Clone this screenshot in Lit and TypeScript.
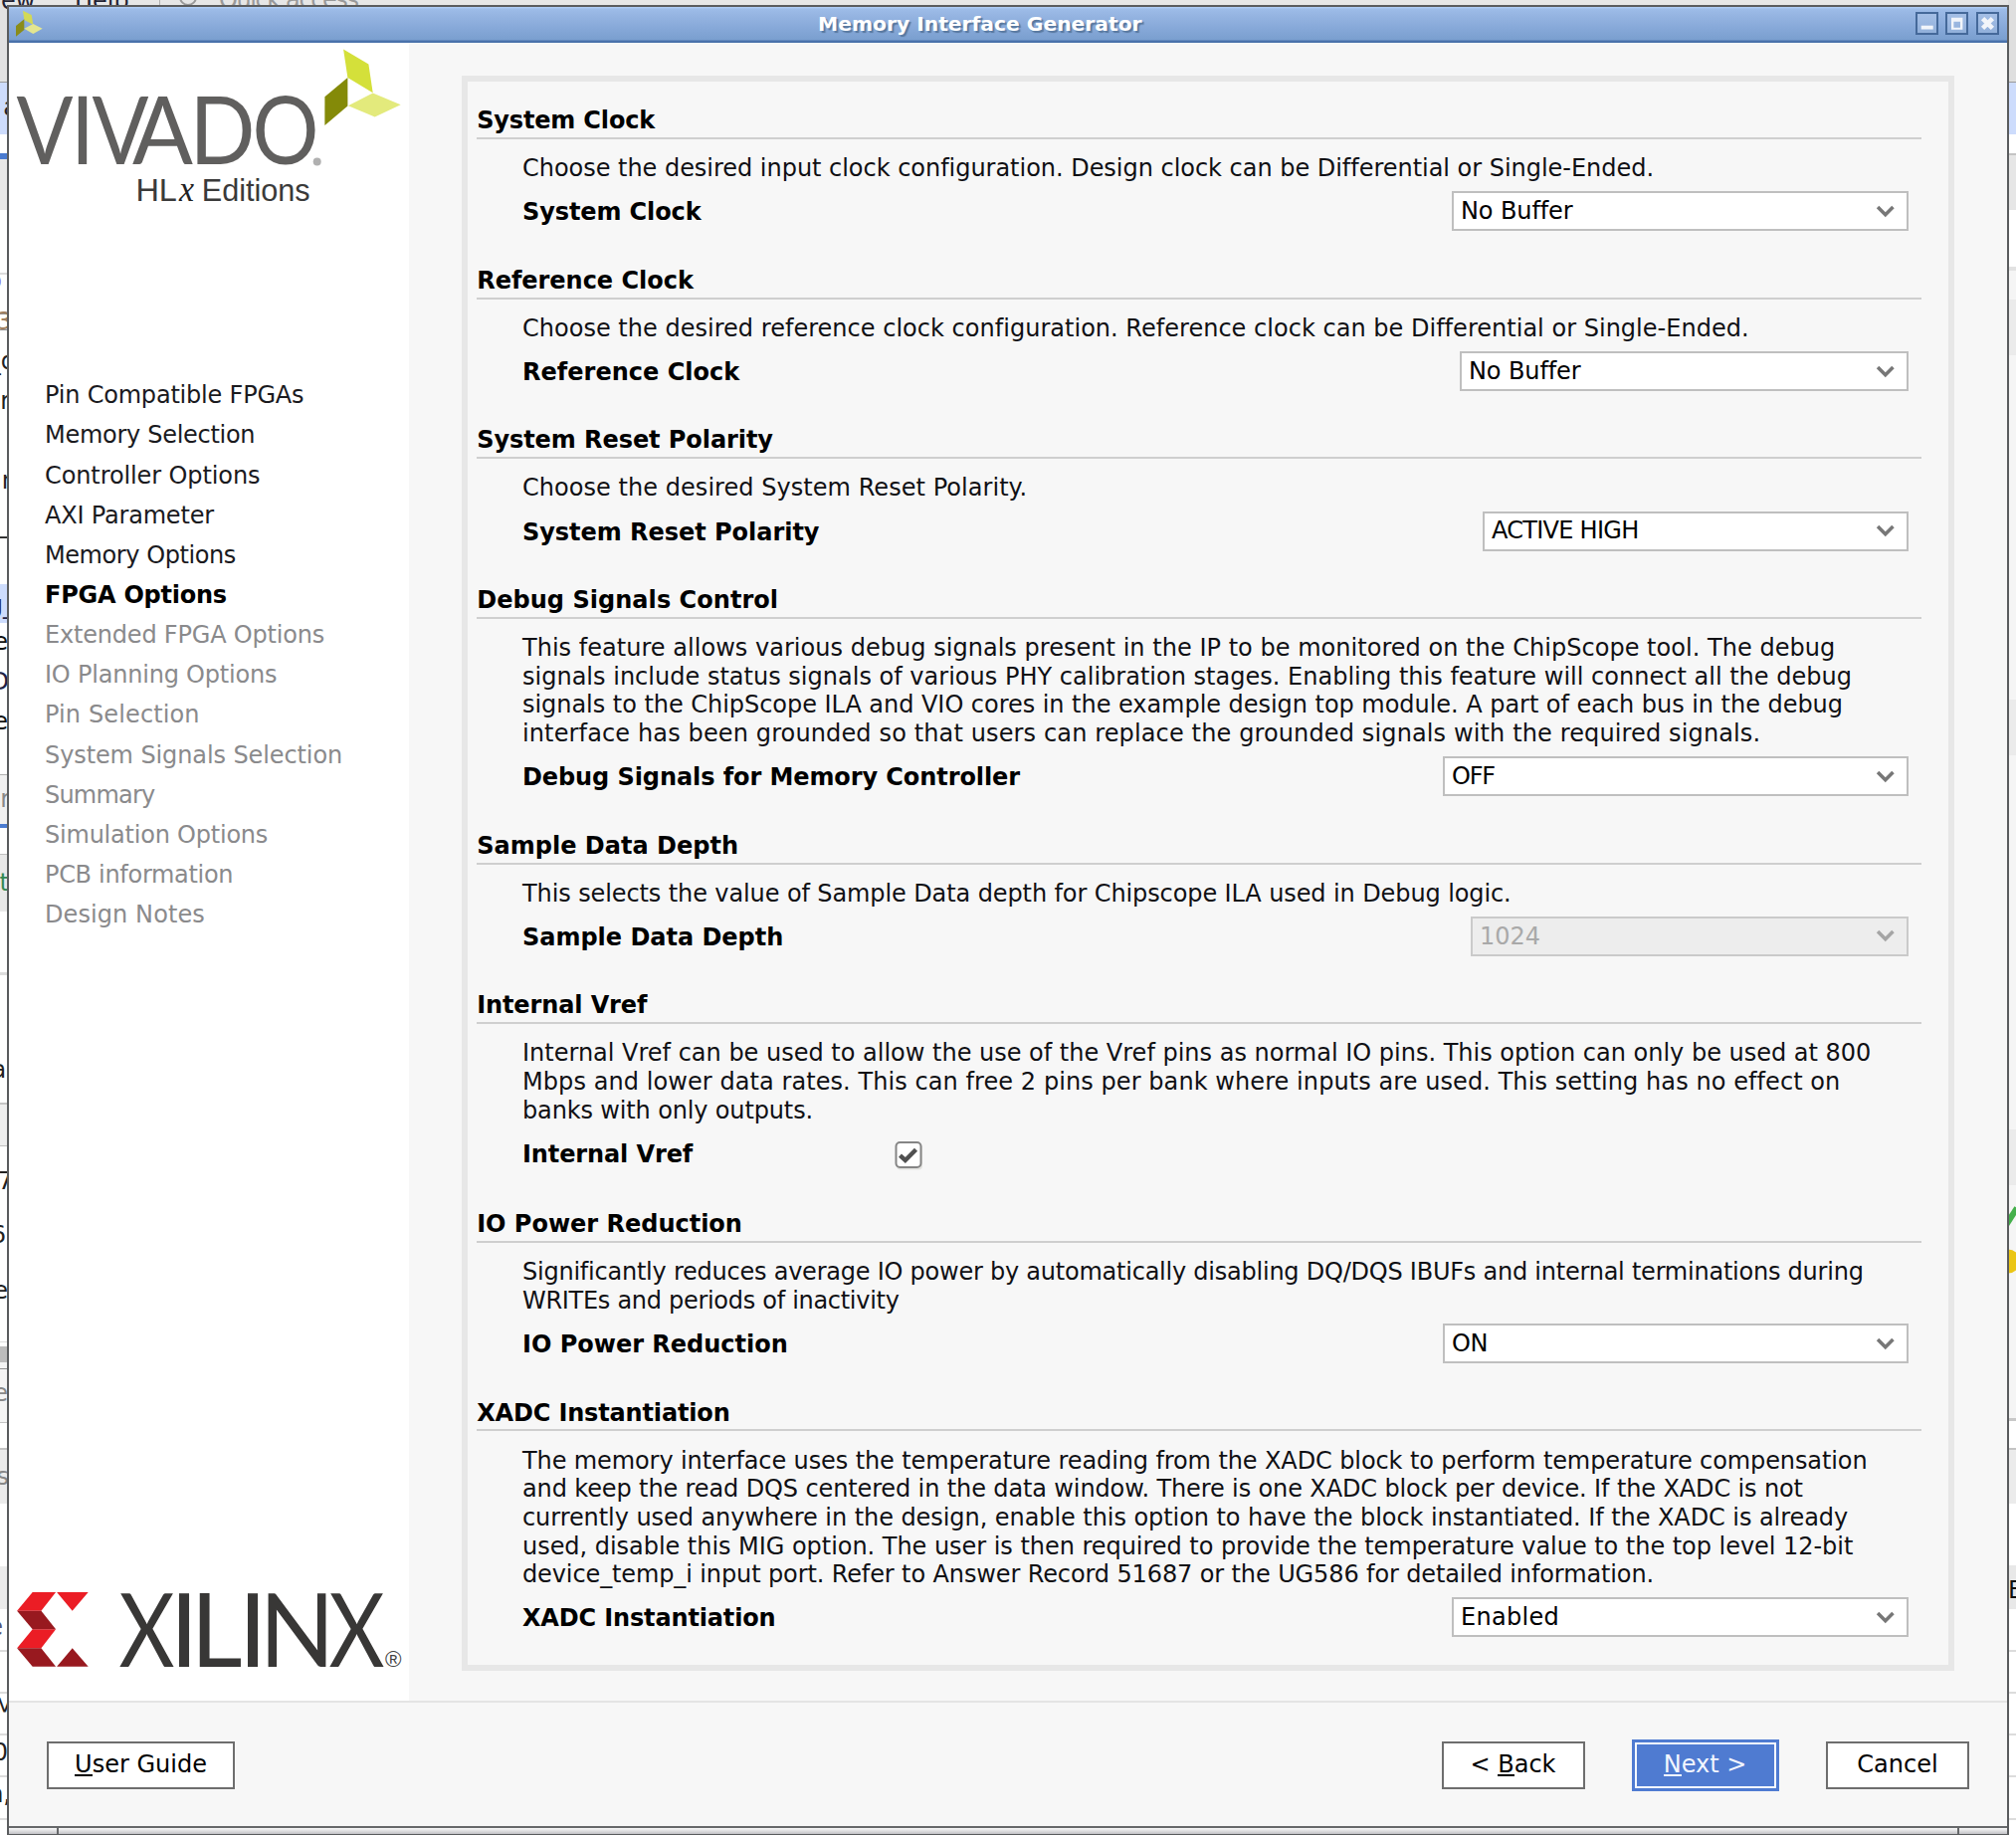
import { LitElement, html, svg, css, nothing } from "lit";

type Line = [text: string, width: number];
interface Section {
  title: Line;
  lines: Line[];
  label: Line;
  value?: Line;
  comboWidth?: number;
  disabled?: boolean;
  checkbox?: boolean;
}

const end = (right: number, origin: number): number => right * 1.2921 - origin + 0.4;
const T = (t: string, e: number): Line => [t, end(e, 479.2)];
const D = (t: string, e: number): Line => [t, end(e, 525)];
const N = (t: string, e: number): Line => [t, end(e, 45)];

const sections: Section[] = [
  {
    title: T("System Clock", 509),
    lines: [D("Choose the desired input clock configuration. Design clock can be Differential or Single-Ended.", 1286)],
    label: D("System Clock", 545),
    value: ["No Buffer", 112.5],
    comboWidth: 459,
  },
  {
    title: T("Reference Clock", 539),
    lines: [D("Choose the desired reference clock configuration. Reference clock can be Differential or Single-Ended.", 1360)],
    label: D("Reference Clock", 575),
    value: ["No Buffer", 112.5],
    comboWidth: 451,
  },
  {
    title: T("System Reset Polarity", 601),
    lines: [D("Choose the desired System Reset Polarity.", 798.5)],
    label: D("System Reset Polarity", 637),
    value: ["ACTIVE HIGH", 147.5],
    comboWidth: 428,
  },
  {
    title: T("Debug Signals Control", 605),
    lines: [
      D("This feature allows various debug signals present in the IP to be monitored on the ChipScope tool. The debug", 1427),
      D("signals include status signals of various PHY calibration stages. Enabling this feature will connect all the debug", 1440),
      D("signals to the ChipScope ILA and VIO cores in the example design top module. A part of each bus in the debug", 1433),
      D("interface has been grounded so that users can replace the grounded signals with the required signals.", 1369),
    ],
    label: D("Debug Signals for Memory Controller", 793),
    value: ["OFF", 43],
    comboWidth: 468,
  },
  {
    title: T("Sample Data Depth", 574),
    lines: [D("This selects the value of Sample Data depth for Chipscope ILA used in Debug logic.", 1175)],
    label: D("Sample Data Depth", 609),
    value: ["1024", 61],
    comboWidth: 440,
    disabled: true,
  },
  {
    title: T("Internal Vref", 503),
    lines: [
      D("Internal Vref can be used to allow the use of the Vref pins as normal IO pins. This option can only be used at 800", 1455),
      D("Mbps and lower data rates. This can free 2 pins per bank where inputs are used. This setting has no effect on", 1431),
      D("banks with only outputs.", 632),
    ],
    label: D("Internal Vref", 538.5),
    checkbox: true,
  },
  {
    title: T("IO Power Reduction", 577),
    lines: [
      D("Significantly reduces average IO power by automatically disabling DQ/DQS IBUFs and internal terminations during", 1449),
      D("WRITEs and periods of inactivity", 699),
    ],
    label: D("IO Power Reduction", 612.5),
    value: ["ON", 36],
    comboWidth: 468,
  },
  {
    title: T("XADC Instantiation", 567.5),
    lines: [
      D("The memory interface uses the temperature reading from the XADC block to perform temperature compensation", 1452),
      D("and keep the read DQS centered in the data window. There is one XADC block per device. If the XADC is not", 1402),
      D("currently used anywhere in the design, enable this option to have the block instantiated. If the XADC is already", 1437),
      D("used, disable this MIG option. The user is then required to provide the temperature value to the top level 12-bit", 1441),
      D("device_temp_i input port. Refer to Answer Record 51687 or the UG586 for detailed information.", 1286),
    ],
    label: D("XADC Instantiation", 603),
    value: ["Enabled", 99],
    comboWidth: 459,
  },
];

const steps: Line[] = [
  N("Pin Compatible FPGAs", 236),
  N("Memory Selection", 198),
  N("Controller Options", 202),
  N("AXI Parameter", 166),
  N("Memory Options", 183),
  N("FPGA Options", 176),
  N("Extended FPGA Options", 252),
  N("IO Planning Options", 215),
  N("Pin Selection", 155),
  N("System Signals Selection", 266),
  N("Summary", 120),
  N("Simulation Options", 208),
  N("PCB information", 181),
  N("Design Notes", 159),
];
const current = 5;

/** One unwrapped run of text, tracked so that it fills a given advance width. */
class FitText extends LitElement {
  static properties = { text: {}, width: { type: Number } };
  declare text: string;
  declare width: number;
  static styles = css`
    :host { display: block; white-space: pre; }
    .run { font-variant-ligatures: none; }
  `;
  render() {
    return html`<span class="run">${this.text}</span>`;
  }
  updated() {
    const run = this.renderRoot.querySelector<HTMLElement>(".run")!;
    run.style.letterSpacing = "0px";
    const natural = run.getBoundingClientRect().width;
    run.style.letterSpacing = `${(this.width - natural) / this.text.length}px`;
  }
}
customElements.define("fit-text", FitText);

const fit = (l: Line) => html`<fit-text .text=${l[0]} .width=${l[1]}></fit-text>`;

// Strips of the window lying underneath: [top, height, colour]
const leftStrips: [number, number, string][] = [
  [0, 82, "#e2e2e2"], [82, 1, "#9a9a9a"], [83, 52, "#cddcfc"], [154, 6, "#4a7bd0"], [160, 51, "#e8e8e8"],
  [274, 2, "#dcdcdc"], [315, 1, "#909090"], [331, 1, "#909090"], [587, 39, "#cddcfc"], [778, 1, "#b0b0b0"],
  [779, 49, "#f0f0f0"], [828, 4, "#4a7bd0"], [858, 1, "#c0c0c0"], [859, 57, "#e8e8e8"], [977, 3, "#dddddd"],
  [1108, 2, "#c4c4c4"], [1110, 41, "#eeeeee"], [1151, 1, "#c0c0c0"], [1348, 1, "#dcdcdc"], [1353, 16, "#bcbcbc"],
  [1369, 60, "#f4f4f4"], [1375, 1, "#909090"], [1429, 1, "#c4c4c4"], [1455, 2, "#c4c4c4"], [1457, 54, "#ebebeb"],
  [1574, 43, "#ebebeb"], [1658, 2, "#dcdcdc"], [1700, 2, "#dcdcdc"], [1742, 2, "#dcdcdc"], [1784, 2, "#dcdcdc"], [1827, 2, "#dcdcdc"],
];
const rightStrips: [number, number, string][] = [
  [0, 82, "#dfdfdf"], [82, 1, "#9a9a9a"], [83, 52, "#cddcfc"], [154, 2, "#c4c4c4"], [156, 55, "#e6e6e6"],
  [268, 4, "#e2e2e2"], [272, 1153, "#f5f5f5"], [301, 56, "#ebebeb"], [703, 56, "#ebebeb"], [1135, 56, "#ebebeb"],
  [1425, 3, "#c8c8c8"], [1455, 2, "#c4c4c4"], [1457, 54, "#ebebeb"],
  [1573, 44, "#e8e8e8"], [1658, 2, "#dcdcdc"], [1700, 2, "#dcdcdc"], [1742, 2, "#dcdcdc"], [1784, 2, "#dcdcdc"], [1827, 2, "#dcdcdc"],
];
// Letters peeking out left of the dialog: [right edge, baseline, text, colour]
const peeks: [number, number, string, string][] = [
  [18, 116, "a", "#222"], [2, 290, "p", "#8a6ad8"], [12, 331, "3", "#a08060"], [16, 371, "_q", "#222"], [10, 411, "r", "#222"],
  [17, 491, "n", "#222"], [9, 535, "_", "#222"], [15, 616, "g_", "#224"], [8, 653, "e", "#111"], [9, 693, "D", "#224"],
  [8, 733, "e", "#111"], [10, 811, "r", "#888"], [9, 895, "t", "#385"], [16, 1083, "ar", "#222"], [13, 1195, "7", "#222"],
  [6, 1249, "6", "#222"], [8, 1305, "e", "#222"], [8, 1408, "e", "#888"], [9, 1492, "s", "#888"],
  [3, 1643, "e", "#557"], [15, 1724, "M", "#222"], [8, 1769, "0", "#222"], [11, 1811, "n,", "#222"],
];

const letter = (ch: string, x: number, w: number, y: number, cls: string) =>
  svg`<text class=${cls} x=${x} y=${y} textLength=${w} lengthAdjust="spacingAndGlyphs">${ch}</text>`;

class AppRoot extends LitElement {
  static styles = css`
    :host { display: block; width: 2026px; height: 1844px; font: 24px/28.66px "DejaVu Sans", sans-serif; color: #000; }
    * { box-sizing: border-box; }
    .desktop { position: relative; width: 2026px; height: 1844px; background: #fff; overflow: hidden; }
    .under { position: absolute; inset: 0; width: 2026px; height: 1844px; }
    .under text { font-family: "DejaVu Sans", sans-serif; font-size: 24px; }
    .window { position: absolute; left: 7px; top: 5px; width: 2012px; height: 1839px; border: 2px solid #5a5c5e; border-width: 2px 2px 1px 2px; background: #f7f7f7; display: flex; flex-direction: column; }
    .titlebar { height: 36px; flex: none; display: flex; align-items: center; background: linear-gradient(#b4d2fa 0, #9dbce8 2px, #96b5e2 8px, #86a8d8 60%, #7a9fcf 33px, #4a72ab 34px, #4a72ab 100%); padding: 0 8px 0 7px; }
    .appicon { flex: none; width: 28px; height: 36px; }
    .caption { flex: 1; text-align: center; font-weight: bold; font-size: 20.25px; line-height: 30px; height: 33px; color: #fff; text-shadow: 2px 2px 1px #58789f; padding-left: 1px; }
    .winbtns { display: flex; gap: 7.7px; margin-top: -3px; }
    .winbtns svg { width: 23px; height: 23px; display: block; }
    .body { height: 1668px; flex: none; display: flex; border-bottom: 2px solid #e4e4e4; }
    .side { width: 402px; flex: none; background: #fff; display: flex; flex-direction: column; }
    .logo { flex: none; width: 402px; display: block; }
    .steps { flex: 1; padding: 167.2px 0 0 36px; }
    .step { height: 40.16px; line-height: 40.16px; color: #8a8a8c; }
    .done { color: #1a1a1e; }
    .now { color: #000; font-weight: bold; }
    .main { flex: 1; padding: 33px 0 0 53px; }
    .frame { width: 1500px; height: 1603px; border: 6px solid #e7e7e7; padding: 21px 0 0 9.2px; }
    .section { display: flex; flex-direction: column; }
    .title { width: 1452px; height: 37px; padding-top: 4.2px; border-bottom: 2px solid #cfcfcf; font-weight: bold; }
    .desc { padding: 15.2px 0 0 45.8px; color: #101014; }
    .control { height: 79.8px; padding: 0 0 0 45.8px; display: flex; align-items: flex-start; }
    .control.check { height: 81.8px; }
    .label { width: 374.5px; font-weight: bold; margin-top: 15.4px; flex: none; }
    .combo { margin: 8.6px 40.3px 0 auto; height: 40px; border: 2px solid #bfbfbf; background: #fff; display: flex; align-items: center; justify-content: space-between; padding: 0 11.5px 0 7.3px; }
    .combo svg { width: 19.5px; height: 13px; flex: none; color: #777; }
    .combo.off { background: #ededed; color: #a9a9a9; border-color: #cacaca; }
    .combo.off svg { color: #a5a5a5; }
    .checkbox { width: 29px; height: 29px; margin-top: 17px; }
    .footer { flex: 1; display: flex; align-items: flex-start; padding: 38.5px 38px 0 38px; }
    .btn { height: 48px; display: flex; align-items: center; justify-content: center; background: #fff; border: 2px solid #6e6e6e; white-space: pre; }
    .btn u { text-decoration: none; border-bottom: 2px solid currentColor; line-height: 22px; display: inline-block; height: 23px; }
    .guide { width: 189px; margin-right: auto; }
    .back { width: 144px; margin-right: 47px; }
    .next { width: 148px; height: 52px; margin: -2px 47.5px 0 0; border: 3.5px solid #4f7bd1; background: #4f7bd1; box-shadow: inset 0 0 0 2px #f4f8ff; color: #f2f6ff; }
    .cancel { width: 144px; }
    .grip { height: 8px; flex: none; display: flex; border-top: 2px solid #66686a; background: linear-gradient(#fafafa, #c2c2c6); }
    .grip i { display: block; border-right: 2px solid #66686a; }
    .g1 { width: 50px; }
    .g3 { width: 48px; }
    .g2 { flex: 1; }
    .g3.g3 { border: 0; }
    .viv { font-family: Lato, "Open Sans", sans-serif; font-size: 95px; font-weight: 400; fill: #605f5e; }
    .xil { font-family: Lato, "Open Sans", sans-serif; font-size: 103.5px; font-weight: 400; fill: #383736; }
    .hlx { font-family: "Liberation Sans", Arial, sans-serif; font-size: 30.5px; fill: #3a3a3a; }
    .hlx.it { font-family: "Liberation Serif", serif; font-style: italic; font-size: 35px; fill: #222; }
    .reg { font-family: "Liberation Sans", Arial, sans-serif; font-size: 22px; fill: #444; }
  `;

  private vivado() {
    return svg`<svg class="logo" height="167" viewBox="8.6 42.8 402 167">
      <polygon fill="#d4e03a" points="344.7,49.3 370,64.3 374.3,93 349,77.7"/>
      <polygon fill="#848a08" points="326,97 349,77.7 349,106.3 326,125.7"/>
      <polygon fill="#e3ea7c" points="349.5,106 374.3,93.3 402.3,105 376.3,117.3"/>
      ${letter("V", 16, 57, 165.3, "viv")}${letter("I", 70.5, 24, 165.3, "viv")}${letter("V", 92, 57, 165.3, "viv")}
      ${letter("A", 132.5, 61, 165.3, "viv")}${letter("D", 190, 66, 165.3, "viv")}${letter("O", 253, 67, 165.3, "viv")}
      <circle cx="318.3" cy="162.3" r="4" fill="#b0b0b0"/>
      ${letter("HL", 136, 41.5, 202.3, "hlx")}
      ${letter("x", 179.5, 15, 202.3, "hlx it")}
      ${letter("Editions", 202.3, 109, 202.3, "hlx")}
    </svg>`;
  }

  private xilinx() {
    return svg`<svg class="logo" height="129" viewBox="8.6 1580 402 129">
      <g fill="#eb1d25">
        <polygon points="32.3,1600 55.7,1600 41,1618.7 16.7,1618.7"/>
        <polygon points="32.3,1637.3 55.7,1637.3 41,1656.3 16.7,1656.3"/>
        <polygon points="56.7,1600 88.3,1600 72.3,1618.7"/>
      </g>
      <g fill="#98191f">
        <polygon points="16.7,1618.7 41,1618.7 55.7,1637.3 32.3,1637.3"/>
        <polygon points="16.7,1656.3 41,1656.3 55.7,1674.7 32.3,1674.7"/>
        <polygon points="72.3,1656.3 88.3,1674.7 56.7,1674.7"/>
      </g>
      ${letter("X", 119, 56, 1674.7, "xil")}${letter("I", 170, 29, 1674.7, "xil")}${letter("L", 191, 52, 1674.7, "xil")}
      ${letter("I", 239, 29, 1674.7, "xil")}${letter("N", 260, 76, 1674.7, "xil")}${letter("X", 330, 56, 1674.7, "xil")}
      ${letter("®", 386.5, 16.5, 1674.5, "reg")}
    </svg>`;
  }

  private section(s: Section) {
    return html`<section class="section">
      <div class="title">${fit(s.title)}</div>
      <div class="desc">${s.lines.map(fit)}</div>
      <div class="control ${s.checkbox ? "check" : ""}">
        <div class="label">${fit(s.label)}</div>
        ${s.checkbox
          ? html`<svg class="checkbox" viewBox="0 0 29 29"><rect x="2" y="2.5" width="26" height="26" rx="4" fill="#e2e2df"/><rect x="1.5" y="1" width="25" height="25" rx="4" fill="#fff" stroke="#858585" stroke-width="2"/><path d="M5.5 14.2 L10.8 19 L21.5 8.3" fill="none" stroke="#505050" stroke-width="4.4"/></svg>`
          : nothing}
        ${s.value
          ? html`<div class="combo ${s.disabled ? "off" : ""}" style="width:${s.comboWidth}px">${fit(s.value)}<svg viewBox="0 0 21 14"><path d="M2.2 2.2 L10.5 10.5 L18.8 2.2" fill="none" stroke="currentColor" stroke-width="3.8"/></svg></div>`
          : nothing}
      </div>
    </section>`;
  }

  render() {
    const box = svg`<rect x="1" y="1" width="21" height="21" fill="#ffffff" fill-opacity=".13" stroke="#45699a" stroke-width="2"/>`;
    return html`<div class="desktop">
      <svg class="under" viewBox="0 0 2026 1844">
        <rect width="2026" height="6" fill="#e6e6e6"/>
        ${leftStrips.map(([y, h, c]) => svg`<rect x="0" y=${y} width="8" height=${h} fill=${c}/>`)}
        ${rightStrips.map(([y, h, c]) => svg`<rect x="2018" y=${y} width="8" height=${h} fill=${c}/>`)}
        <text x="1" y="9" fill="#223">ew</text><text x="75" y="9" fill="#223">Help</text>
        <rect x="160" y="0" width="1" height="5" fill="#b0b0b0"/>
        <circle cx="189" cy="-3" r="8" fill="none" stroke="#999" stroke-width="2"/>
        <text x="220" y="8" fill="#999" textLength="141">Quick access</text>
        ${peeks.map(([x, y, t, c]) => svg`<text x=${x} y=${y} fill=${c} text-anchor="end">${t}</text>`)}
        <path d="M2016 1231 L2027 1214" stroke="#45b04c" stroke-width="6"/>
        <circle cx="2018" cy="1267.5" r="12" fill="#ebc616"/>
        <text x="2018" y="1606" fill="#111">E</text>
      </svg>
      <div class="window">
        <div class="titlebar">
          <svg class="appicon" viewBox="16 7 28 36">
            <polygon fill="#d3d955" points="23,10.7 31.7,15 33.3,24.7 24.3,20"/>
            <polygon fill="#8a8c1a" points="16,26 24.3,19.3 24.3,30 16,36.7"/>
            <polygon fill="#e4e690" points="24.3,28.7 33.3,24 42.7,28.7 33.3,34"/>
          </svg>
          <div class="caption">Memory Interface Generator</div>
          <div class="winbtns">
            <svg viewBox="0 0 23 23">${box}<rect x="5.7" y="13.7" width="12" height="3.8" fill="#f2f5fa"/></svg>
            <svg viewBox="0 0 23 23">${box}<path fill="#f2f5fa" fill-rule="evenodd" d="M6 5.7h11.4v12H6zM8.4 9.7v6h6.6v-6z"/></svg>
            <svg viewBox="0 0 23 23">${box}<path d="M8.2 8.2 L14.8 14.8 M14.8 8.2 L8.2 14.8" stroke="#f2f5fa" stroke-width="4.6" stroke-linecap="square" fill="none"/></svg>
          </div>
        </div>
        <div class="body">
          <div class="side">
            ${this.vivado()}
            <div class="steps">${steps.map((s, i) => html`<div class="step ${i < current ? "done" : i === current ? "now" : ""}">${fit(s)}</div>`)}</div>
            ${this.xilinx()}
          </div>
          <div class="main"><div class="frame">${sections.map((s) => this.section(s))}</div></div>
        </div>
        <div class="footer">
          <div class="btn guide"><u>U</u>ser Guide</div>
          <div class="btn back">&lt; <u>B</u>ack</div>
          <div class="btn next"><u>N</u>ext &gt;</div>
          <div class="btn cancel">Cancel</div>
        </div>
        <div class="grip"><i class="g1"></i><i class="g2"></i><i class="g3"></i></div>
      </div>
    </div>`;
  }
}
customElements.define("app-root", AppRoot);
